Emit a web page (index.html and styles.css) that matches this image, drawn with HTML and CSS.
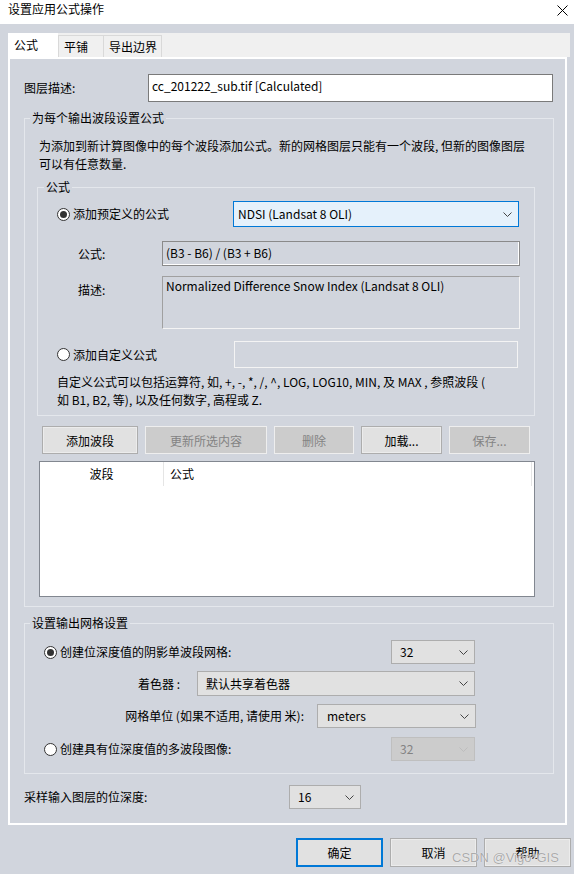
FILE: index.html
```html
<!DOCTYPE html>
<html lang="zh-CN">
<head>
    <meta charset="UTF-8">
    <title>设置应用公式操作</title>
    <link rel="stylesheet" href="styles.css">
</head>
<body>
    <div class="titlebar">
        <span>设置应用公式操作</span>
        <svg class="close" width="11" height="11" viewBox="0 0 11 11">
            <path d="M0.5 0.5 L10.5 10.5 M10.5 0.5 L0.5 10.5" stroke="#000" stroke-width="1" fill="none"/>
        </svg>
    </div>

    <div class="tabs">
        <div class="tab active">公式</div>
        <div class="tab tab-tile">平铺</div>
        <div class="tab tab-bounds">导出边界</div>
    </div>

    <div class="panel">
        <div class="layer-row">
            <label class="layer-label">图层描述:</label>
            <div class="textbox">cc_201222_sub.tif [Calculated]</div>
        </div>

        <fieldset class="group group-bands">
            <legend>为每个输出波段设置公式</legend>
            <p class="note">为添加到新计算图像中的每个波段添加公式。新的网格图层只能有一个波段, 但新的图像图层<br>可以有任意数量.</p>

            <fieldset class="group group-formula">
                <legend>公式</legend>
                <div class="radio-row preset-row">
                    <div class="radio-label"><span class="radio on"></span>添加预定义的公式</div>
                    <div class="select select-focus select-ndsi">
                        <span>NDSI (Landsat 8 OLI)</span>
                        <svg class="chev" width="9" height="5" viewBox="0 0 9 5"><path d="M0.5 0.5 L4.5 4.5 L8.5 0.5" stroke="#444" fill="none"/></svg>
                    </div>
                </div>
                <div class="field-row">
                    <div class="field-label">公式:</div>
                    <div class="field">(B3 - B6) / (B3 + B6)</div>
                </div>
                <div class="field-row desc-row">
                    <div class="field-label">描述:</div>
                    <div class="field field-tall">Normalized Difference Snow Index (Landsat 8 OLI)</div>
                </div>
                <div class="radio-row custom-row">
                    <div class="radio-label custom-label"><span class="radio"></span>添加自定义公式</div>
                    <div class="custom-input"></div>
                </div>
                <p class="note2">自定义公式可以包括运算符, 如, +, -, *, /, ^, LOG, LOG10, MIN, 及 MAX , 参照波段 (<br>如 B1, B2, 等), 以及任何数字, 高程或 Z.</p>
            </fieldset>

            <div class="btn-row">
                <button class="btn btn-add">添加波段</button>
                <button class="btn btn-update" disabled>更新所选内容</button>
                <button class="btn btn-delete" disabled>删除</button>
                <button class="btn btn-load">加载...</button>
                <button class="btn btn-save" disabled>保存...</button>
            </div>

            <div class="listbox">
                <div class="list-head">
                    <div class="col-band">波段</div>
                    <div class="col-formula">公式</div>
                </div>
            </div>
        </fieldset>

        <fieldset class="group group-output">
            <legend>设置输出网格设置</legend>
            <div class="opt-row">
                <div class="radio-label opt-label"><span class="radio on"></span>创建位深度值的阴影单波段网格:</div>
                <div class="select select-depth">
                    <span>32</span>
                    <svg class="chev" width="9" height="5" viewBox="0 0 9 5"><path d="M0.5 0.5 L4.5 4.5 L8.5 0.5" stroke="#444" fill="none"/></svg>
                </div>
            </div>
            <div class="shader-row">
                <div class="right-label shader-label">着色器 :</div>
                <div class="select select-shader">
                    <span>默认共享着色器</span>
                    <svg class="chev" width="9" height="5" viewBox="0 0 9 5"><path d="M0.5 0.5 L4.5 4.5 L8.5 0.5" stroke="#444" fill="none"/></svg>
                </div>
            </div>
            <div class="unit-row">
                <div class="right-label unit-label">网格单位 (如果不适用, 请使用 米):</div>
                <div class="select select-unit">
                    <span>meters</span>
                    <svg class="chev" width="9" height="5" viewBox="0 0 9 5"><path d="M0.5 0.5 L4.5 4.5 L8.5 0.5" stroke="#444" fill="none"/></svg>
                </div>
            </div>
            <div class="opt-row opt-row-multi">
                <div class="radio-label opt-label"><span class="radio"></span>创建具有位深度值的多波段图像:</div>
                <div class="select select-depth disabled">
                    <span>32</span>
                    <svg class="chev" width="9" height="5" viewBox="0 0 9 5"><path d="M0.5 0.5 L4.5 4.5 L8.5 0.5" stroke="#bdbdbd" fill="none"/></svg>
                </div>
            </div>
        </fieldset>

        <div class="sample-row">
            <div class="sample-label">采样输入图层的位深度:</div>
            <div class="select select-sample">
                <span>16</span>
                <svg class="chev" width="9" height="5" viewBox="0 0 9 5"><path d="M0.5 0.5 L4.5 4.5 L8.5 0.5" stroke="#444" fill="none"/></svg>
            </div>
        </div>
    </div>

    <div class="footer">
        <button class="btn btn-ok">确定</button>
        <button class="btn btn-cancel">取消</button>
        <button class="btn btn-help">帮助</button>
    </div>

    <div class="watermark">CSDN @Vigo*GIS</div>
</body>
</html>
```

FILE: styles.css
```css
* {
    margin: 0;
    padding: 0;
    box-sizing: border-box;
}
body {
    position: relative;
    width: 574px;
    height: 874px;
    overflow: hidden;
    background: #d1d5dd;
    font-family: "Noto Sans CJK SC", "Noto Sans", sans-serif;
    font-size: 12px;
    line-height: 16px;
    color: #000;
}
.titlebar {
    display: flex;
    justify-content: space-between;
    align-items: center;
    height: 24px;
    padding: 0 6px 6px 8px;
    background: #fff;
}
.close {
    display: block;
    margin-top: 2px;
}

/* tabs */
.tabs {
    position: relative;
    z-index: 1;
    display: flex;
    align-items: flex-end;
    width: 562px;
    height: 24px;
    margin: 9px 0 0 8px;
    background: #f0f0f0;
}
.tab {
    height: 22px;
    padding-left: 5px;
    line-height: 22px;
    background: #f0f0f0;
    border: 1px solid #d9d9d9;
    border-bottom: 0;
}
.tab.active {
    width: 50px;
    height: 25px;
    margin-bottom: -1px;
    padding-left: 6px;
    line-height: 24px;
    background: #fff;
    border: 0;
}
.tab-tile {
    width: 46px;
}
.tab-bounds {
    width: 58px;
    border-left: 0;
    padding-left: 5px;
}

/* tab page */
.panel {
    width: 559px;
    margin-left: 8px;
    padding-bottom: 14px;
    border: 2px solid #fff;
}
.layer-row {
    display: flex;
    margin: 15px 0 0 14px;
}
.layer-label {
    width: 124px;
    line-height: 28px;
}
.textbox {
    width: 405px;
    height: 28px;
    padding: 2px 3px 0;
    line-height: 18px;
    background: #fff;
    border: 1px solid #7a7a7a;
}

fieldset.group {
    min-width: 0;
    border: 1px solid #e4e7ec;
}
fieldset.group legend {
    padding: 0 2px;
    line-height: 16px;
}
.group-bands {
    width: 530px;
    margin: 8px 0 0 14px;
    padding: 0 0 9px;
}
.group-bands > legend {
    margin-left: 5px;
}
.note {
    margin: 11px 0 0 14px;
    line-height: 18px;
    white-space: nowrap;
}

.group-formula {
    width: 498px;
    margin: 6px 0 0 12px;
    padding: 0 0 6px;
}
.group-formula > legend {
    margin-left: 6px;
}
.radio-row {
    display: flex;
    align-items: center;
}
.radio-label {
    display: flex;
    align-items: center;
    gap: 3px;
    white-space: nowrap;
}
.radio {
    display: flex;
    align-items: center;
    justify-content: center;
    width: 13px;
    height: 13px;
    background: #fff;
    border: 1px solid #333;
    border-radius: 50%;
}
.radio.on::after {
    content: "";
    width: 7px;
    height: 7px;
    background: #333;
    border-radius: 50%;
}
.preset-row {
    height: 26px;
    margin: 6px 0 0 19px;
}
.preset-row .radio-label {
    width: 176px;
}
.select {
    display: flex;
    align-items: center;
    justify-content: space-between;
    padding: 0 6px 0 8px;
    background: #e1e1e1;
    border: 1px solid #adadad;
    white-space: nowrap;
}
.select span {
    line-height: 16px;
}
.select .chev {
    display: block;
}
.select-focus {
    background: #e5f1fb;
    border-color: #0078d7;
}
.select-ndsi {
    width: 286px;
    height: 26px;
    padding-left: 4px;
}
.select.disabled {
    color: #838383;
    background: #cccccc;
    border-color: #bfbfbf;
}

.field-row {
    display: flex;
    margin: 14px 0 0 40px;
}
.field-label {
    width: 84px;
    line-height: 25px;
}
.field {
    width: 358px;
    height: 25px;
    padding: 0 3px;
    line-height: 22px;
    border: 1px solid #8a8a8a;
    box-shadow: inset -1px -1px 0 #fff;
}
.desc-row {
    margin-top: 10px;
}
.desc-row .field-label {
    padding-top: 6px;
    line-height: 16px;
}
.field-tall {
    height: 53px;
    padding-top: 1px;
    line-height: 16px;
    border-color: #a0a0a0 #f4f4f4 #f4f4f4 #a0a0a0;
    box-shadow: none;
}
.custom-row {
    height: 27px;
    margin: 12px 0 0 19px;
}
.custom-label {
    width: 177px;
}
.custom-input {
    width: 284px;
    height: 27px;
    border: 1px solid #f4f4f4;
}
.note2 {
    margin: 5px 0 0 19px;
    line-height: 18px;
    white-space: nowrap;
}

/* buttons */
.btn {
    font-family: inherit;
    font-size: 12px;
    color: #000;
    background: #e1e1e1;
    border: 1px solid #adadad;
    box-shadow: inset 0 0 0 1px #ececec;
}
.btn:disabled {
    color: #838383;
    background: #cccccc;
    border-color: #eeeeee;
    box-shadow: none;
}
.btn-row {
    display: flex;
    gap: 7px;
    margin: 10px 0 0 17px;
}
.btn-row .btn {
    height: 28px;
}
.btn-add {
    width: 96px;
}
.btn-update {
    width: 122px;
}
.btn-delete {
    width: 80px;
}
.btn-load,
.btn-save {
    width: 81px;
}

.listbox {
    width: 496px;
    height: 136px;
    margin: 7px 0 0 14px;
    background: #fff;
    border: 1px solid #828790;
}
.list-head {
    display: flex;
    height: 24px;
    line-height: 24px;
}
.col-band {
    width: 124px;
    text-align: center;
    border-right: 1px solid #e5e5e5;
}
.col-formula {
    flex: 1;
    padding-left: 6px;
    margin-right: 2px;
    border-right: 1px solid #e5e5e5;
}

/* output group */
.group-output {
    width: 530px;
    margin: 8px 0 0 14px;
    padding: 0 0 12px;
}
.group-output > legend {
    margin-left: 5px;
}
.opt-row {
    display: flex;
    align-items: center;
    height: 24px;
    margin: 9px 0 0 19px;
}
.opt-label {
    width: 347px;
}
.select-depth {
    width: 84px;
    height: 24px;
}
.shader-row,
.unit-row {
    display: flex;
    align-items: center;
}
.shader-row {
    height: 25px;
    margin-top: 7px;
}
.unit-row {
    height: 24px;
    margin-top: 8px;
}
.right-label {
    text-align: right;
    white-space: nowrap;
}
.shader-label {
    width: 172px;
    padding-right: 17px;
}
.select-shader {
    width: 278px;
    height: 25px;
}
.unit-label {
    width: 292px;
    padding-right: 13px;
}
.select-unit {
    width: 159px;
    height: 24px;
    padding-left: 9px;
}
.opt-row-multi {
    margin-top: 9px;
}

.sample-row {
    display: flex;
    align-items: center;
    height: 24px;
    margin: 11px 0 0 14px;
}
.sample-label {
    width: 265px;
}
.select-sample {
    width: 72px;
    height: 24px;
}

/* dialog buttons */
.footer {
    display: flex;
    justify-content: flex-end;
    gap: 7px;
    margin-top: 13px;
    padding-right: 3px;
}
.footer .btn {
    width: 87px;
    height: 29px;
}
.btn-ok {
    border: 2px solid #0078d7;
    box-shadow: none;
}
.btn-help {
    width: 88px;
}

.watermark {
    position: absolute;
    left: 452px;
    top: 850px;
    font-family: "Liberation Sans", Arial, sans-serif;
    font-size: 13px;
    line-height: 16px;
    color: rgba(150, 150, 150, 0.8);
    text-shadow: 0 0 1px #fff;
}
```
